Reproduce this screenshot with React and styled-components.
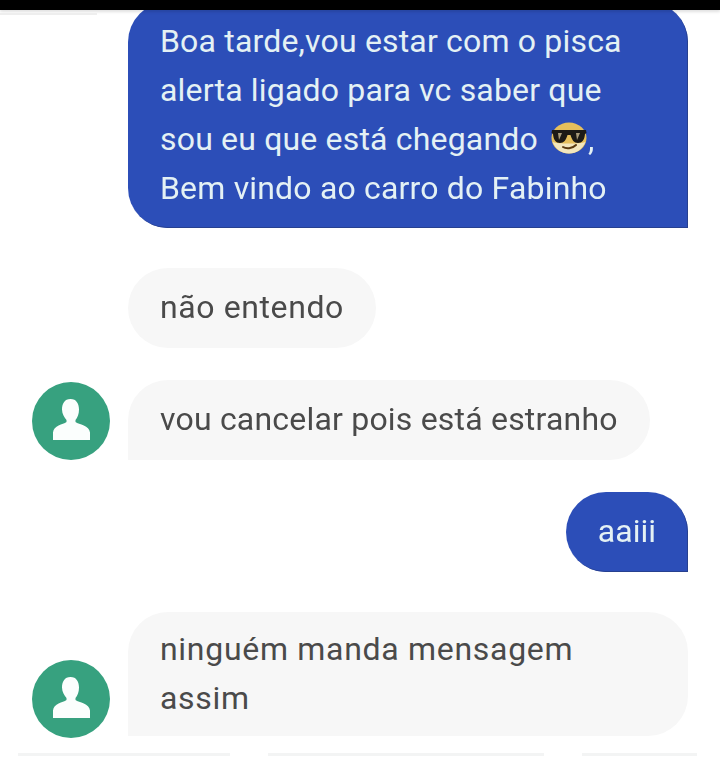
import React from "react";
import styled, { createGlobalStyle } from "styled-components";

const Global = createGlobalStyle`
  html, body { margin: 0; padding: 0; background: #fff; }
`;

const Page = styled.div`
  width: 720px;
  height: 758px;
  overflow: hidden;
  background: #fff;
  font-family: Roboto, "Liberation Sans", sans-serif;
  display: flex;
  flex-direction: column;
`;

const TopBar = styled.div`
  position: relative;
  z-index: 1;
  flex: none;
  height: 10px;
  background: #000;
  box-shadow: 0 2px 3px rgba(0, 0, 0, 0.12);
`;

const TopHairline = styled.div`
  position: absolute;
  top: 13px;
  left: 0;
  width: 97px;
  height: 2px;
  background: #eeeeee;
`;

const Thread = styled.div`
  display: flex;
  flex-direction: column;
  padding: 0 32px;
  margin-top: -8px;
  filter: blur(0.35px);
`;

const Row = styled.div`
  display: flex;
  align-items: flex-end;
  justify-content: ${(p) => (p.$out ? "flex-end" : "flex-start")};
  margin-top: ${(p) => p.$gap || 0}px;
  padding-left: ${(p) => (p.$indent ? 96 : 0)}px;
  gap: 18px;
`;

const Bubble = styled.div`
  box-sizing: border-box;
  width: ${(p) => (p.$w ? `${p.$w}px` : "auto")};
  min-height: 80px;
  padding: ${(p) => p.$py ?? 15}px 32px;
  font-size: 32px;
  font-weight: 400;
  line-height: 49px;
  letter-spacing: ${(p) => p.$track ?? 0.18}px;
  white-space: pre-line;
  color: ${(p) => (p.$out ? "#e4f1f4" : "#4a4a4a")};
  background: ${(p) => (p.$out ? "#2c4eb8" : "#f7f7f7")};
  box-shadow: ${(p) => (p.$out ? "inset -1px -1px 0 #27408f" : "none")};
  border-radius: ${(p) => p.$r || "40px"};
`;

const Avatar = styled.div`
  flex: none;
  width: 78px;
  height: 78px;
  margin-bottom: ${(p) => p.$drop || 0}px;
  border-radius: 50%;
  background: #37a17f;
`;

const AvatarIcon = styled.svg`
  display: block;
  width: 78px;
  height: 78px;
`;

const Emoji = styled.svg`
  display: inline-block;
  width: 36px;
  height: 32px;
  margin: 0 1px 0 5px;
  vertical-align: -4px;
`;

const Footer = styled.div`
  display: flex;
  margin-top: 17px;
  padding-left: 18px;
  gap: 38px;
`;

const FooterLine = styled.div`
  width: ${(p) => p.$w}px;
  height: 3px;
  background: #f3f4f4;
`;

const Person = () => (
  <AvatarIcon viewBox="0 0 78 78" aria-hidden="true">
    <path
      fill="#fbfefd"
      d="M38.500 17c6 0 8.500 5 8.500 10.500c0 4.500-1.500 8-3.500 10.500v2c3.500 2.500 14 3.500 14.500 10.500V58H21v-7.500c.5-7 10-8 13.500-10.500v-2c-2-2.500-4.500-6-4.500-10.500C30 22 32.500 17 38.500 17z"
    />
  </AvatarIcon>
);

const Cool = () => (
  <Emoji viewBox="0 0 36 32" aria-hidden="true">
    <ellipse cx="18" cy="16" rx="17.500" ry="15.500" fill="#e6bf5c" />
    <path d="M1.500 20c3 7 9 11.500 16.500 11.500S31.500 27 34.500 20c-5 2-28 2-33 0z" fill="#f2e6bd" />
    <path d="M1 8h34l.500 3-1.500 1c-.5 6-3 9-7 9s-6-3-7.500-8h-3C15 18 13 21 9 21s-6.500-3-7-9l-1.500-1z" fill="#1d1a16" />
    <path d="M7 11l4 0-3 7zM25 11l4 0-3 7z" fill="#a89a7a" />
    <path d="M12 25c3 2 9 2 13-2" stroke="#5a3a10" strokeWidth="2" fill="none" strokeLinecap="round" />
  </Emoji>
);

export default function App() {
  return (
    <Page>
      <Global />
      <TopBar>
        <TopHairline />
      </TopBar>
      <Thread>
        <Row $out>
          <Bubble $out $w={560} $r="40px 40px 0 40px">
            Boa tarde,vou estar com o pisca{"\n"}alerta ligado para vc saber que{"\n"}sou eu que está chegando <Cool />,{"\n"}Bem vindo ao carro do Fabinho
          </Bubble>
        </Row>
        <Row $gap={40} $indent>
          <Bubble $track={0.6}>não entendo</Bubble>
        </Row>
        <Row $gap={32}>
          <Avatar><Person /></Avatar>
          <Bubble $r="40px 40px 40px 0" $track={0.2}>vou cancelar pois está estranho</Bubble>
        </Row>
        <Row $out $gap={32}>
          <Bubble $out $r="40px 40px 0 40px" $track={0}>aaiii</Bubble>
        </Row>
        <Row $gap={40}>
          <Avatar $drop={-2}><Person /></Avatar>
          <Bubble $w={560} $py={13} $r="40px 40px 40px 0" $track={0.7}>ninguém manda mensagem{"\n"}assim</Bubble>
        </Row>
      </Thread>
      <Footer>
        <FooterLine $w={212} />
        <FooterLine $w={276} />
        <FooterLine $w={115} />
      </Footer>
    </Page>
  );
}
